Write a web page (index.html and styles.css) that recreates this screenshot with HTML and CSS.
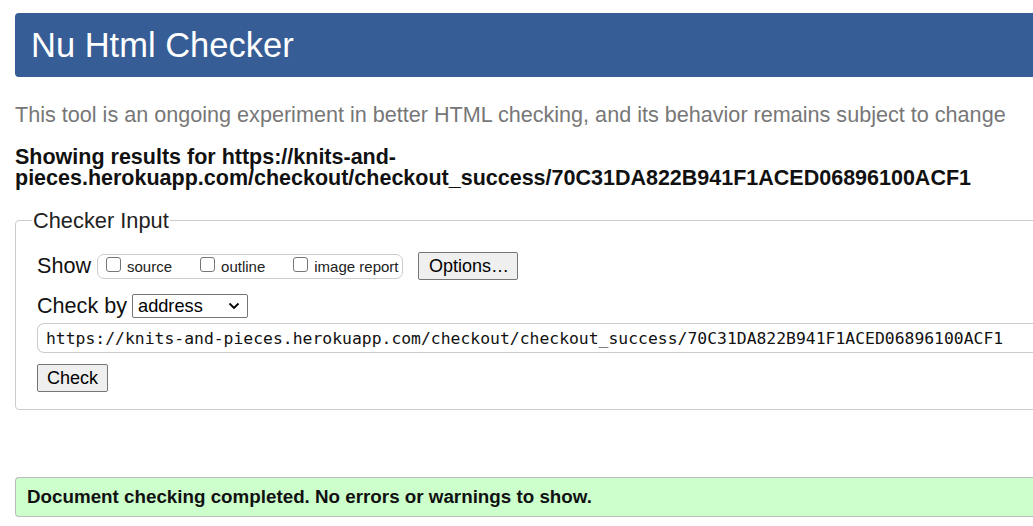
FILE: index.html
```html
<!DOCTYPE html>
<html lang="en">
<head>
<meta charset="utf-8">
<title>Nu Html Checker</title>
<link rel="stylesheet" href="styles.css">
</head>
<body>
<div class="page">
  <header class="banner"><h1>Nu Html Checker</h1></header>
  <p class="intro">This tool is an ongoing experiment in better HTML checking, and its behavior remains subject to change</p>
  <p class="results">Showing results for https://knits-and-<br>pieces.herokuapp.com/checkout/checkout_success/70C31DA822B941F1ACED06896100ACF1</p>
  <fieldset class="input">
    <legend>Checker Input</legend>
    <div class="row show-row">
      <span class="lbl">Show</span>
      <span class="opts">
        <label><span class="box"></span>source</label>
        <label><span class="box"></span>outline</label>
        <label><span class="box"></span>image report</label>
      </span>
      <button class="btn options">Options…</button>
    </div>
    <div class="row by-row">
      <span class="lbl">Check by</span>
      <span class="select">address<svg width="12" height="8" viewBox="0 0 12 8"><path d="M1.5 1.5 6 6 10.5 1.5" fill="none" stroke="#000" stroke-width="1.8"/></svg></span>
    </div>
    <div class="url">https://knits-and-pieces.herokuapp.com/checkout/checkout_success/70C31DA822B941F1ACED06896100ACF1</div>
    <button class="btn check">Check</button>
  </fieldset>
  <div class="success">Document checking completed. No errors or warnings to show.</div>
</div>
</body>
</html>
```
FILE: styles.css
```css
html, body { margin: 0; padding: 0; overflow: hidden; background: #fff; }
body { font-family: "Liberation Sans", Arial, sans-serif; color: #000; }
.page { width: 1100px; padding: 13px 0 0 15px; }
.banner {
  height: 64px; background: #365d95; border-radius: 4px 0 0 4px;
  display: flex; align-items: center; padding-left: 16px;
}
.banner h1 { margin: 0; font-size: 34.5px; font-weight: normal; color: #fff; line-height: 40px; }
.intro { margin: 26px 0 0; font-size: 21.6px; line-height: 24px; color: #777; }
.results { margin: 20px 0 0; font-size: 21.5px; font-weight: bold; line-height: 21px; color: #111; }
.input {
  margin: 19px 0 0; border: 1px solid #ccc; border-radius: 4px;
  padding: 0 0 17px 21px; min-width: 0;
}
.input legend { font-size: 21.8px; line-height: 25px; padding: 0 1px; margin-left: -5px; color: #222; }
.row { display: flex; align-items: center; }
.show-row { margin-top: 19px; height: 28px; }
.lbl { font-size: 21.6px; color: #111; }
.opts {
  margin-left: 6px; border: 1px solid #ccc; border-radius: 7px;
  height: 25px; box-sizing: border-box; width: 306px;
  display: flex; align-items: center; padding: 0 0 0 8px; gap: 28px;
}
.opts label { font-size: 15px; display: flex; align-items: center; color: #222; }
.box {
  width: 13px; height: 13px; border: 1px solid #767676; border-radius: 3px;
  margin: 0 6px 3px 0; background: #fff;
}
.btn {
  font-family: "Liberation Sans", Arial, sans-serif; font-size: 18px;
  background: #efefef; border: 1px solid #767676; border-radius: 2px; color: #000;
  padding: 0 10px; box-sizing: border-box;
}
.options { margin-left: 15px; height: 28px; width: 100px; }
.by-row { margin-top: 14px; height: 24px; }
.select {
  margin-left: 5px; width: 116px; height: 24px; box-sizing: border-box;
  border: 1px solid #767676; border-radius: 2px; display: flex; align-items: center;
  justify-content: space-between; padding: 0 7px 0 5px; font-size: 18.2px;
}
.url {
  margin-top: 5px; height: 30px; box-sizing: border-box; border: 1px solid #ccc; border-right: 0;
  border-radius: 7px 0 0 7px; display: flex; align-items: center; padding-left: 8px;
  font-family: "DejaVu Sans Mono", monospace; font-size: 16.4px; color: #111; white-space: nowrap;
}
.check { margin-top: 11px; height: 28px; width: 71px; padding: 0; }
.success {
  margin-top: 67px; height: 40px; box-sizing: border-box; background: #ccffcc;
  border: 1px solid #bbb; border-right: 0; border-radius: 4px 0 0 4px;
  display: flex; align-items: center; padding-left: 11px;
  font-size: 18.8px; font-weight: bold; color: #111;
}
```
